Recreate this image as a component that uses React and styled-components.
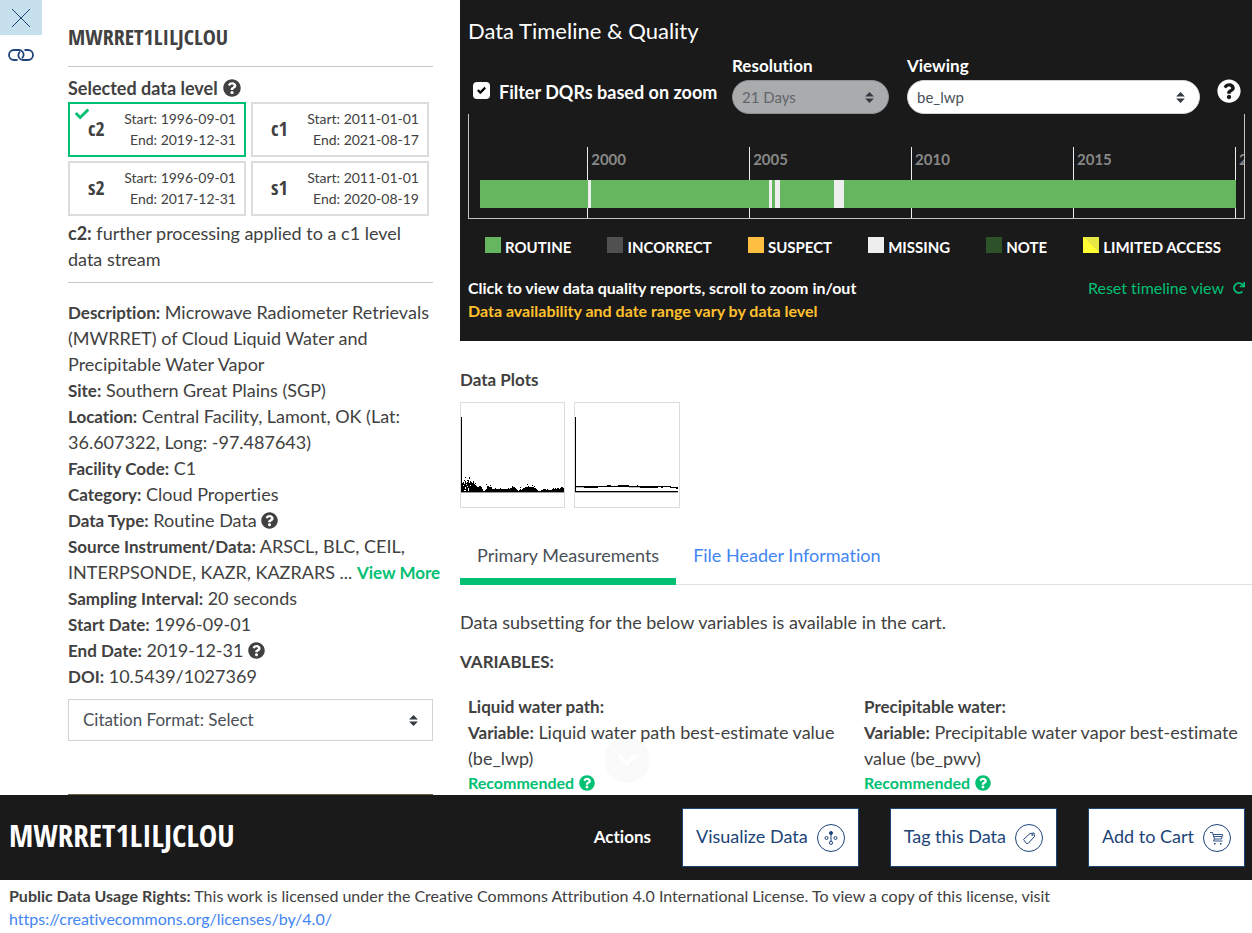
import React, { useState } from 'react';
import styled, { createGlobalStyle, css } from 'styled-components';
import {
  FaCheck,
  FaChevronDown,
  FaQuestionCircle,
  FaRedo,
} from 'react-icons/fa';

const levels = [
  { id: 'c2', start: '1996-09-01', end: '2019-12-31' },
  { id: 'c1', start: '2011-01-01', end: '2021-08-17' },
  { id: 's2', start: '1996-09-01', end: '2017-12-31' },
  { id: 's1', start: '2011-01-01', end: '2020-08-19' },
];

const details = [
  {
    label: 'Description',
    value:
      'Microwave Radiometer Retrievals (MWRRET) of Cloud Liquid Water and Precipitable Water Vapor',
  },
  { label: 'Site', value: 'Southern Great Plains (SGP)' },
  {
    label: 'Location',
    value: 'Central Facility, Lamont, OK (Lat: 36.607322, Long: -97.487643)',
  },
  { label: 'Facility Code', value: 'C1' },
  { label: 'Category', value: 'Cloud Properties' },
  { label: 'Data Type', value: 'Routine Data', help: true },
  {
    label: 'Source Instrument/Data',
    value: 'ARSCL, BLC, CEIL, INTERPSONDE, KAZR, KAZRARS ...',
    more: true,
  },
  { label: 'Sampling Interval', value: '20 seconds' },
  { label: 'Start Date', value: '1996-09-01' },
  { label: 'End Date', value: '2019-12-31', help: true },
  { label: 'DOI', value: '10.5439/1027369' },
];

const legend = [
  { name: 'ROUTINE', color: '#66b660' },
  { name: 'INCORRECT', color: '#505050' },
  { name: 'SUSPECT', color: '#ffbf40' },
  { name: 'MISSING', color: '#eeeeee' },
  { name: 'NOTE', color: '#2d5229' },
  {
    name: 'LIMITED ACCESS',
    color: 'linear-gradient(45deg, #ffff33 50%, #e8e845 50%)',
  },
];

const variables = [
  {
    title: 'Liquid water path',
    text: 'Liquid water path best-estimate value (be_lwp)',
  },
  {
    title: 'Precipitable water',
    text: 'Precipitable water vapor best-estimate value (be_pwv)',
  },
];

const FIRST_YEAR = 1996.35;
const YEARS_SHOWN = 23.93;
const ticks = [2000, 2005, 2010, 2015, 2020];
const gaps = [
  [2000.03, 0.1],
  [2005.62, 0.1],
  [2005.81, 0.13],
  [2007.63, 0.31],
];
const span = years => `${(years / YEARS_SHOWN) * 100}%`;
const at = year => span(year - FIRST_YEAR);

function Timeline() {
  return (
    <TimelineBox>
      <svg width="100%" height="104" aria-label="Data timeline">
        {ticks.map(year => (
          <React.Fragment key={year}>
            <TickLine x={at(year)} y="33" width="1" height="71" />
            <svg x={at(year)} y="33" overflow="visible">
              <TickText x="4" y="18">
                {year}
              </TickText>
            </svg>
          </React.Fragment>
        ))}
        <Segment x={at(1996.7)} y="66" width={span(23.34)} height="28" />
        {gaps.map(([year, length]) => (
          <Segment
            key={year}
            $missing
            x={at(year)}
            y="66"
            width={span(length)}
            height="28"
          />
        ))}
      </svg>
    </TimelineBox>
  );
}

// one bar height per column, left to right
const liquidHeights = [
  8, 9, 7, 10, 8, 9, 11, 8, 10, 9, 8, 8, 7, 6, 5, 4, 4, 5, 5, 4, 2, 0, 0, 1, 2,
  5, 5, 4, 4, 4, 2, 2, 2, 3, 2, 2, 2, 2, 3, 2, 2, 2, 2, 2, 2, 2, 3, 2, 3, 3, 4,
  4, 4, 3, 2, 1, 0, 1, 2, 1, 2, 3, 3, 4, 4, 4, 5, 4, 4, 4, 4, 4, 3, 3, 2, 1, 0,
  0, 0, 1, 1, 2, 2, 2, 1, 2, 1, 1, 1, 1, 2, 3, 2, 3, 2, 3, 3, 2, 3, 4, 4, 3,
];

function LiquidPlot() {
  return (
    <svg width="103" height="104" viewBox="0 0 103 104" shapeRendering="crispEdges">
      <path d="M0 14h1v75H0z" />
      <path d="M0 88h103v1H0z" />
      <path d="M0 89h103v1H0z" fill="#999" />
      {liquidHeights.map((height, i) => (
        <rect key={i} x={i + 1} y={88 - height} width="1" height={height} />
      ))}
      <path d="M4 74h1v1H4zM8 74h1v2H8zM3 77h1v1H3zM6 77h2v1H6zM12 78h1v2h-1zM14 80h1v1h-1zM25 81h1v1h-1zM29 82h1v1h-1zM18 83h1v1h-1zM51 83h1v1h-1zM59 84h1v1h-1zM66 81h1v1h-1zM71 82h1v1h-1zM73 83h1v1h-1z" />
      <path
        d="M2 82h1v1H2zM4 84h1v2H4zM3 87h2v1H3zM6 83h1v1H6zM7 85h1v3H7zM5 81h1v1H5zM9 82h1v1H9z"
        fill="#fff"
      />
    </svg>
  );
}

function WaterPlot() {
  return (
    <svg width="104" height="104" viewBox="0 0 104 104" shapeRendering="crispEdges">
      <path d="M0 14h1v75H0z" />
      <path d="M0 88h103v1H0z" />
      <path d="M0 89h103v1H0z" fill="#aaa" />
      <path d="M1 83h31v1H1zM9 84h14v1H9zM25 83h40v1H25zM32 82h4v1h-4zM43 82h11v1H43zM62 82h1v1h-1zM65 83h31v1H65zM65 84h18v1H65zM86 84h2v1h-2zM95 84h8v1h-8zM101 85h2v1h-2z" />
      <path d="M1 84h8v1H1zM54 84h11v1H54z" fill="#bbb" />
    </svg>
  );
}

function LinkIcon() {
  return (
    <svg width="26" height="14" viewBox="0 0 26 14">
      <g fill="none" stroke="#1c4478" strokeWidth="1.800">
        <path d="M9.500 12H6A5 5 0 0 1 6 2h5a4.600 4.600 0 0 1 4.600 5c0 1.500-.8 2.600-1.800 3.200" />
        <path d="M16.500 2H20a5 5 0 0 1 0 10h-5a4.600 4.600 0 0 1-4.600-5c0-1.500.8-2.600 1.800-3.200" />
      </g>
    </svg>
  );
}

function VisualizeIcon() {
  return (
    <svg width="14" height="14" viewBox="0 0 14 14">
      <g fill="none" stroke="#1c4478">
        <path d="M7 2v8" />
        <circle cx="2.500" cy="7" r="1.500" />
        <circle cx="11.500" cy="7" r="1.500" />
        <circle cx="7" cy="11.800" r="1.600" />
        <circle cx="7" cy="2" r="1.500" fill="#1c4478" />
      </g>
    </svg>
  );
}

function TagIcon() {
  return (
    <svg width="14" height="14" viewBox="0 0 14 14">
      <g fill="none" stroke="#1c4478" strokeLinejoin="round">
        <path d="M1.500 8.500l6.500-6 4-.5.500 3.500-6.500 7H4.500z" />
        <circle cx="10.300" cy="4" r="0.600" />
      </g>
    </svg>
  );
}

function CartIcon() {
  return (
    <svg width="14" height="14" viewBox="0 0 14 14">
      <g fill="none" stroke="#1c4478" strokeWidth="0.900">
        <path d="M0 1.500h2.500l2 6.500-1 2h9M3 3.500h9.500L11.500 8h-7M3.500 5.500H12" />
      </g>
      <path d="M4 12h1.500v1.500H4zM10 12h1.500v1.500H10z" fill="#1c4478" />
    </svg>
  );
}

const actions = [
  { name: 'Visualize Data', Icon: VisualizeIcon },
  { name: 'Tag this Data', Icon: TagIcon },
  { name: 'Add to Cart', Icon: CartIcon },
];

export default function App() {
  const [level, setLevel] = useState('c2');
  const [filterDqrs, setFilterDqrs] = useState(true);

  return (
    <>
      <GlobalStyle />
      <Page>
        <Main>
          <Rail>
            <CloseButton type="button" aria-label="Close">
              <svg width="20" height="20" viewBox="0 0 20 20">
                <path d="M1 1l18 18M19 1L1 19" stroke="#1c4478" />
              </svg>
            </CloseButton>
            <RailButton type="button" aria-label="Copy link">
              <LinkIcon />
            </RailButton>
          </Rail>

          <Sidebar>
            <StreamTitle>MWRRET1LILJCLOU</StreamTitle>
            <LevelHeading>
              Selected data level <FaQuestionCircle />
            </LevelHeading>
            <LevelGrid>
              {levels.map(({ id, start, end }) => (
                <LevelCard
                  key={id}
                  type="button"
                  $active={id === level}
                  onClick={() => setLevel(id)}
                >
                  {id === level && <LevelCheck />}
                  <LevelName>{id}</LevelName>
                  <LevelDates>
                    <span>Start: {start}</span>
                    <span>End: {end}</span>
                  </LevelDates>
                </LevelCard>
              ))}
            </LevelGrid>
            <LevelNote>
              <b>c2:</b> further processing applied to a c1 level data stream
            </LevelNote>
            <Details>
              {details.map(({ label, value, help, more }) => (
                <p key={label}>
                  <b>{label}:</b> {value} {help && <FaQuestionCircle />}
                  {more && <MoreButton type="button">View More</MoreButton>}
                </p>
              ))}
            </Details>
            <CitationSelect aria-label="Citation format">
              <option>Citation Format: Select</option>
            </CitationSelect>
            <SitePhoto />
          </Sidebar>

          <Content>
            <TimelinePanel>
              <PanelTitle>Data Timeline &amp; Quality</PanelTitle>
              <Controls>
                <FilterLabel>
                  <Checkbox
                    type="checkbox"
                    checked={filterDqrs}
                    onChange={e => setFilterDqrs(e.target.checked)}
                  />
                  Filter DQRs based on zoom
                </FilterLabel>
                <ResolutionField>
                  Resolution
                  <PillSelect disabled>
                    <option>21 Days</option>
                  </PillSelect>
                </ResolutionField>
                <ViewingField>
                  Viewing
                  <PillSelect>
                    <option>be_lwp</option>
                  </PillSelect>
                </ViewingField>
                <HelpButton type="button" aria-label="Timeline help">
                  <FaQuestionCircle />
                </HelpButton>
              </Controls>
              <Timeline />
              <Legend>
                {legend.map(({ name, color }) => (
                  <LegendItem key={name}>
                    <Swatch $color={color} />
                    {name}
                  </LegendItem>
                ))}
              </Legend>
              <PanelNotes>
                <div>
                  <p>Click to view data quality reports, scroll to zoom in/out</p>
                  <Warning>Data availability and date range vary by data level</Warning>
                </div>
                <ResetButton type="button">
                  Reset timeline view <FaRedo />
                </ResetButton>
              </PanelNotes>
            </TimelinePanel>

            <PlotsTitle>Data Plots</PlotsTitle>
            <Plots>
              <Plot>
                <LiquidPlot />
              </Plot>
              <Plot>
                <WaterPlot />
              </Plot>
            </Plots>

            <Tabs role="tablist">
              <Tab type="button" role="tab" aria-selected="true" $active>
                Primary Measurements
              </Tab>
              <Tab type="button" role="tab" aria-selected="false">
                File Header Information
              </Tab>
            </Tabs>
            <SubsetNote>
              Data subsetting for the below variables is available in the cart.
            </SubsetNote>
            <VariablesTitle>VARIABLES:</VariablesTitle>
            <VariableGrid>
              {variables.map(({ title, text }) => (
                <Variable key={title}>
                  <p>
                    <b>{title}:</b>
                  </p>
                  <p>
                    <b>Variable:</b> {text}
                  </p>
                  <Recommended>
                    Recommended <FaQuestionCircle />
                  </Recommended>
                </Variable>
              ))}
            </VariableGrid>
          </Content>
          <ScrollHint>
            <FaChevronDown />
          </ScrollHint>
        </Main>

        <ActionBar>
          <BarTitle>MWRRET1LILJCLOU</BarTitle>
          <ActionsLabel>Actions</ActionsLabel>
          <ActionList>
            {actions.map(({ name, Icon }) => (
              <ActionButton key={name} type="button">
                {name}
                <IconRing>
                  <Icon />
                </IconRing>
              </ActionButton>
            ))}
          </ActionList>
        </ActionBar>
        <Rights>
          <b>Public Data Usage Rights:</b> This work is licensed under the
          Creative Commons Attribution 4.0 International License. To view a copy
          of this license, visit{' '}
          <a href="https://creativecommons.org/licenses/by/4.0/">
            https://creativecommons.org/licenses/by/4.0/
          </a>
        </Rights>
      </Page>
    </>
  );
}

const GlobalStyle = createGlobalStyle`
  *, *::before, *::after {
    box-sizing: border-box;
  }
  body {
    margin: 0;
    font-family: Lato, sans-serif;
    font-size: 18px;
    line-height: 26px;
    font-variant-ligatures: none;
    color: #414141;
    background: #fff;
  }
  b {
    line-height: 1;
  }
  button, select, input {
    font: inherit;
    color: inherit;
  }
  button {
    padding: 0;
    border: 0;
    background: none;
    cursor: pointer;
  }
  p, h1, h2, h3 {
    margin: 0;
  }
`;

const condensed = css`
  font-family: 'Open Sans Condensed', 'Roboto Condensed', sans-serif;
  font-weight: 700;
`;

const arrows = css`
  appearance: none;
  background-image: url("data:image/svg+xml,%3csvg xmlns='http://www.w3.org/2000/svg' viewBox='0 0 4 5'%3e%3cpath fill='%23343a40' d='M2 0L0 2h4zm0 5L0 3h4z'/%3e%3c/svg%3e");
  background-repeat: no-repeat;
  background-position: right 14px center;
  background-size: 9px 11px;
`;

const Page = styled.div`
  display: flex;
  flex-direction: column;
  height: 100vh;
`;

const Main = styled.main`
  position: relative;
  flex: 1;
  min-height: 0;
  display: grid;
  grid-template-columns: 42px minmax(0, 19fr) minmax(0, 36fr);
  overflow: hidden;
`;

const Rail = styled.nav`
  display: flex;
  flex-direction: column;
`;

const RailButton = styled.button`
  display: flex;
  align-items: center;
  justify-content: center;
  height: 40px;
`;

const CloseButton = styled(RailButton)`
  height: 35px;
  background: #c6e0ee;
`;

const Sidebar = styled.aside`
  padding: 0 27px 0 26px;
`;

const StreamTitle = styled.h1`
  ${condensed}
  height: 67px;
  padding-top: 20px;
  font-size: 22px;
  line-height: 32px;
  border-bottom: 1px solid #c8c8c8;
`;

const LevelHeading = styled.h2`
  display: flex;
  align-items: center;
  gap: 5px;
  margin-top: 8px;
  font-size: 18px;
  font-weight: 700;
`;

const LevelGrid = styled.div`
  display: grid;
  grid-template-columns: 1fr 1fr;
  gap: 4px 5px;
  margin: 1px 4px 0 0;
`;

const LevelCard = styled.button`
  position: relative;
  display: flex;
  align-items: center;
  justify-content: space-between;
  height: 55px;
  padding: 0 8px 2px 18px;
  border: 2px solid ${({ $active }) => ($active ? '#00c073' : '#dcdcdc')};
`;

const LevelCheck = styled(FaCheck)`
  position: absolute;
  top: 3px;
  left: 5px;
  width: 14px;
  height: 14px;
  color: #00c073;
`;

const LevelName = styled.span`
  ${condensed}
  font-size: 20px;
`;

const LevelDates = styled.span`
  display: flex;
  flex-direction: column;
  align-items: flex-end;
  font-size: 14px;
  line-height: 21px;
`;

const LevelNote = styled.p`
  padding: 4px 0 10px;
  border-bottom: 1px solid #c8c8c8;
`;

const Details = styled.div`
  margin: 16px -10px 0 0;

  b {
    font-size: 17px;
  }
  svg {
    width: 17px;
    height: 17px;
    vertical-align: -2px;
  }
`;

const MoreButton = styled.button`
  font-size: 17px;
  font-weight: 700;
  line-height: 1;
  color: #00c073;
`;

const CitationSelect = styled.select`
  ${arrows}
  display: block;
  width: 100%;
  height: 42px;
  margin-top: 10px;
  padding: 0 14px;
  border: 1px solid #ced4da;
  border-radius: 0;
  background-color: #fff;
  color: #495057;
  font-size: 17px;
`;

const SitePhoto = styled.div`
  height: 120px;
  margin-top: 53px;
  background: #6b5f45;
`;

const Content = styled.section`
  min-width: 0;
`;

const TimelinePanel = styled.section`
  height: 341px;
  padding: 17px 7px 0 8px;
  background: #1a1a1a;
  color: #fff;
`;

const PanelTitle = styled.h2`
  font-size: 22px;
  line-height: 28px;
  font-weight: 400;
`;

const Controls = styled.div`
  display: flex;
  align-items: flex-end;
  height: 69px;
`;

const FilterLabel = styled.label`
  display: flex;
  align-items: center;
  flex: 259 0 0;
  gap: 9px;
  height: 44px;
  padding-left: 5px;
  font-size: 18px;
  font-weight: 700;
  white-space: nowrap;
`;

const Checkbox = styled.input`
  appearance: none;
  width: 17px;
  height: 17px;
  margin: 0 0 4px;
  border-radius: 4px;
  background: #fff;

  &:checked {
    background: #fff
      url("data:image/svg+xml,%3csvg xmlns='http://www.w3.org/2000/svg' viewBox='0 0 8 8'%3e%3cpath fill='%23000' d='M6.560.750l-3.590 3.610-1.540-1.550L0 4.260 2.970 7.250 8 2.190z'/%3e%3c/svg%3e")
      center / 9px 9px no-repeat;
  }
`;

const Field = styled.label`
  display: flex;
  flex-direction: column;
  font-size: 17px;
  font-weight: 700;
  line-height: 20px;
`;

const ResolutionField = styled(Field)`
  flex: 157 0 0;
`;

const ViewingField = styled(Field)`
  flex: 293 0 0;
  margin-left: 18px;
`;

const PillSelect = styled.select`
  ${arrows}
  width: 100%;
  height: 34px;
  margin-top: 4px;
  padding: 0 9px;
  border: 1px solid #ced4da;
  border-radius: 17px;
  background-color: #fff;
  color: #495057;
  font-size: 15px;
  font-weight: 400;

  &:disabled {
    border-color: #8b9095;
    background-color: #aaabad;
    color: #60656a;
    opacity: 1;
  }
`;

const HelpButton = styled.button`
  display: flex;
  margin: 0 4px 11px 17px;
  color: #fff;

  svg {
    width: 24px;
    height: 24px;
  }
`;

const TimelineBox = styled.div`
  height: 105px;
  border: 1px solid #c4c4c4;
  border-top: 0;

  svg {
    display: block;
  }
`;

const TickLine = styled.rect`
  fill: #eee;
  shape-rendering: crispEdges;
`;

const TickText = styled.text`
  fill: #888;
  font-size: 15px;
  font-weight: 700;
`;

const Segment = styled.rect`
  fill: ${({ $missing }) => ($missing ? '#eeeeee' : '#66b660')};
  shape-rendering: crispEdges;
`;

const Legend = styled.ul`
  display: flex;
  justify-content: space-between;
  margin: 14px 0 0;
  padding: 0 24px 0 17px;
  list-style: none;
`;

const LegendItem = styled.li`
  display: flex;
  gap: 4px;
  font-size: 15px;
  font-weight: 700;
  line-height: 28px;
`;

const Swatch = styled.span`
  width: 16px;
  height: 16px;
  margin-top: 4px;
  background: ${({ $color }) => $color};
`;

const PanelNotes = styled.div`
  display: flex;
  justify-content: space-between;
  align-items: flex-start;
  margin-top: 15px;
  font-size: 16px;
  font-weight: 700;
  line-height: 23px;
`;

const Warning = styled.p`
  color: #ffc02e;
`;

const ResetButton = styled.button`
  display: flex;
  align-items: center;
  gap: 9px;
  font-weight: 400;
  color: #00c073;

  svg {
    width: 12px;
    height: 12px;
  }
`;

const PlotsTitle = styled.h3`
  margin-top: 26px;
  font-size: 17px;
  font-weight: 700;
`;

const Plots = styled.div`
  display: flex;
  gap: 9px;
  margin-top: 9px;
`;

const Plot = styled.div`
  border: 1px solid #dcdcdc;

  svg {
    display: block;
  }
`;

const Tabs = styled.div`
  display: flex;
  height: 50px;
  margin-top: 27px;
  border-bottom: 1px solid #dee2e6;
`;

const Tab = styled.button`
  height: 50px;
  padding: 0 17px 4px;
  border-bottom: 7px solid ${({ $active }) => ($active ? '#00c073' : 'transparent')};
  color: ${({ $active }) => ($active ? '#495057' : '#4285f4')};
`;

const SubsetNote = styled.p`
  margin-top: 24px;
`;

const VariablesTitle = styled.h3`
  margin-top: 14px;
  font-size: 17px;
  font-weight: 700;
`;

const VariableGrid = styled.div`
  display: grid;
  grid-template-columns: 1fr 1fr;
  margin-top: 18px;
`;

const Variable = styled.div`
  padding: 0 6px 0 8px;

  b {
    font-size: 17px;
  }
`;

const Recommended = styled.p`
  display: flex;
  align-items: center;
  gap: 5px;
  font-size: 16px;
  line-height: 23px;
  font-weight: 700;
  color: #00c073;
`;

const ScrollHint = styled.div`
  position: absolute;
  bottom: 12px;
  left: 50%;
  display: flex;
  align-items: center;
  justify-content: center;
  width: 46px;
  height: 46px;
  margin-left: -22px;
  border-radius: 50%;
  background: rgba(0, 0, 0, 0.02);
  color: #fff;
  pointer-events: none;

  svg {
    width: 22px;
    height: 22px;
  }
`;

const ActionBar = styled.section`
  display: flex;
  align-items: center;
  height: 85px;
  padding: 0 7px 0 9px;
  background: #1a1a1a;
  color: #fff;
`;

const BarTitle = styled.h2`
  ${condensed}
  padding-bottom: 5px;
  font-size: 31px;
  line-height: 40px;
`;

const ActionsLabel = styled.span`
  margin: 0 31px 0 auto;
  padding-bottom: 2px;
  font-size: 17px;
  font-weight: 700;
`;

const ActionList = styled.div`
  display: flex;
  gap: 31px;
`;

const ActionButton = styled.button`
  display: flex;
  align-items: center;
  gap: 9px;
  height: 59px;
  padding: 0 13px 4px;
  border: 1px solid #1c4478;
  background: #fff;
  color: #1c4478;
`;

const IconRing = styled.span`
  display: flex;
  align-items: center;
  justify-content: center;
  width: 28px;
  height: 28px;
  margin-top: 4px;
  border: 1px solid #1c4478;
  border-radius: 50%;
`;

const Rights = styled.footer`
  padding: 4px 9px 3px;
  font-size: 16px;
  line-height: 23px;

  a {
    color: #4285f4;
    text-decoration: none;
  }
`;
